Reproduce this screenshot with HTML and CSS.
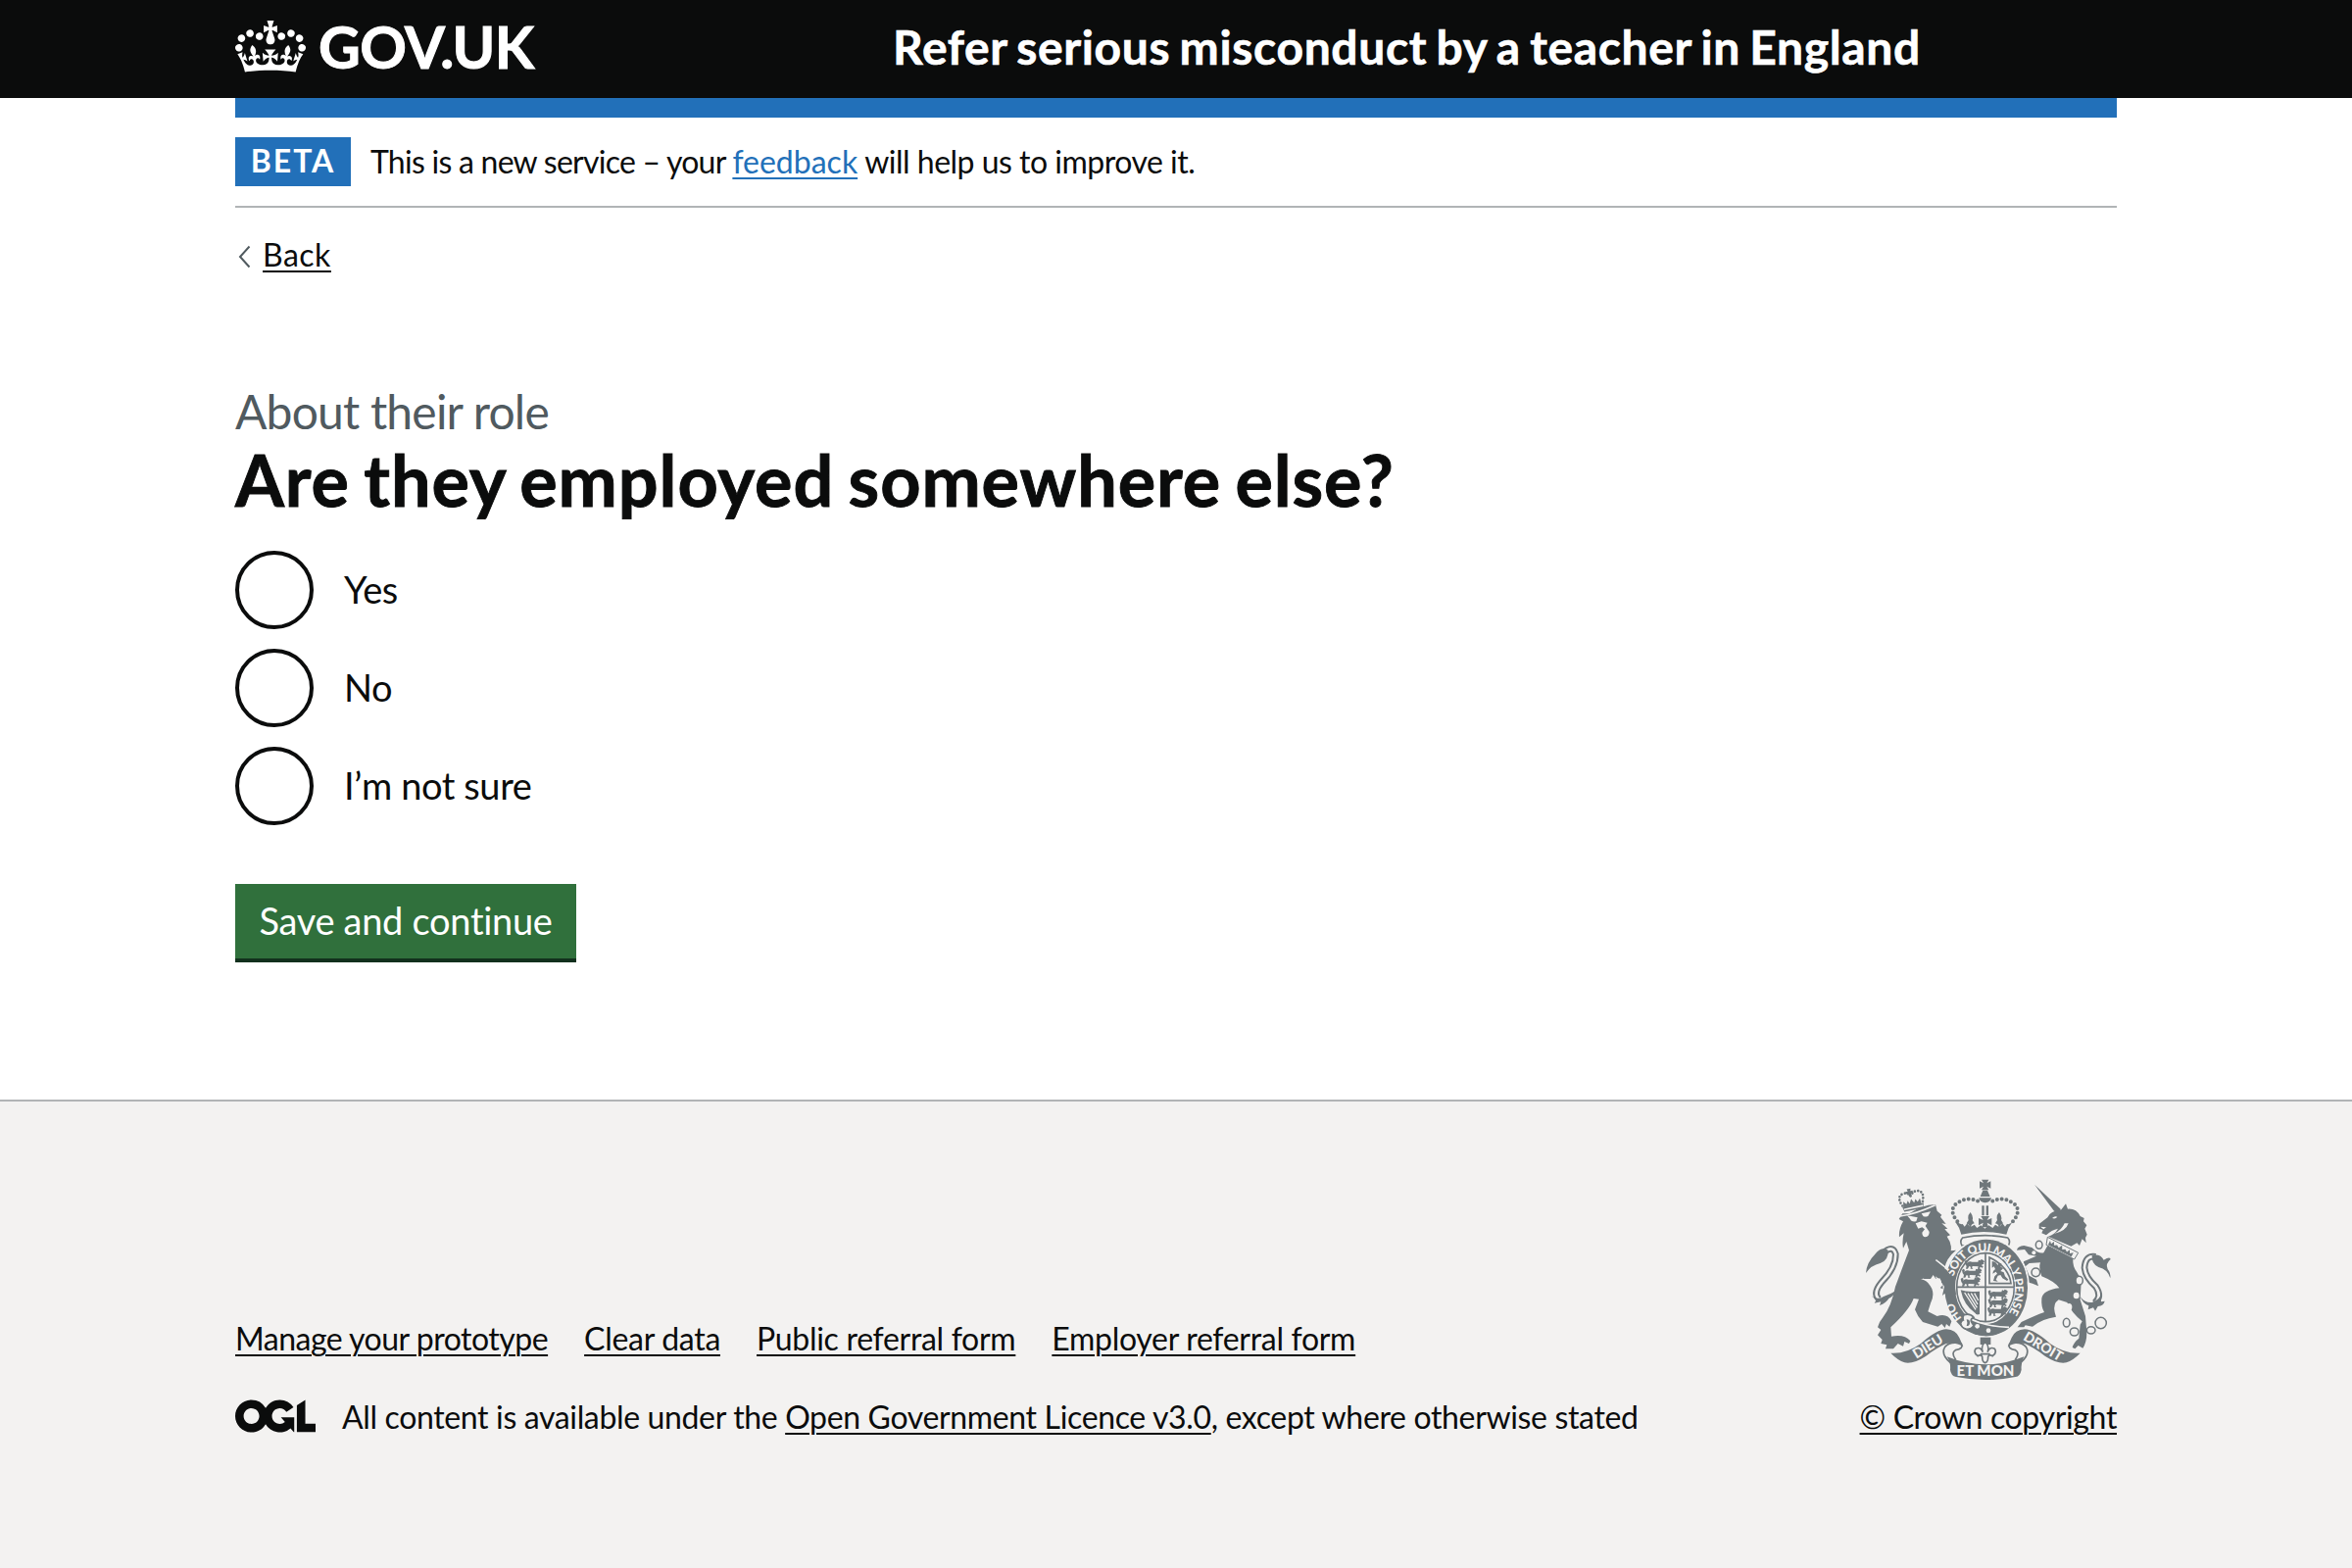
FILE: index.html
```html
<!DOCTYPE html>
<html lang="en">
<head>
<meta charset="utf-8">
<title>Are they employed somewhere else?</title>
<link rel="stylesheet" href="styles.css">
</head>
<body>
<header class="header">
  <div class="container header-inner">
    <a class="logo" href="#">
      <svg class="logo-crown" viewBox="0 0 132 97" aria-hidden="true"><path fill="currentColor" fill-rule="evenodd" d="M25 30.2c3.5 1.5 7.7-.2 9.1-3.7 1.5-3.6-.2-7.8-3.9-9.2-3.6-1.4-7.6.3-9.1 3.9-1.4 3.5.3 7.5 3.9 9zM9 39.5c3.6 1.5 7.8-.2 9.2-3.7 1.5-3.6-.2-7.8-3.9-9.1-3.6-1.5-7.6.2-9.1 3.8-1.4 3.5.3 7.5 3.8 9zM4.4 57.2c3.5 1.5 7.7-.2 9.1-3.8 1.5-3.6-.2-7.7-3.9-9.1-3.5-1.5-7.6.3-9.1 3.8-1.4 3.5.3 7.6 3.9 9.1zm38.3-21.4c3.5 1.5 7.7-.2 9.1-3.8 1.5-3.6-.2-7.7-3.9-9.1-3.6-1.5-7.6.3-9.1 3.8-1.3 3.6.4 7.7 3.9 9.1zm64.4-5.6c-3.6 1.5-7.8-.2-9.1-3.7-1.5-3.6.2-7.8 3.8-9.2 3.6-1.4 7.7.3 9.2 3.9 1.3 3.5-.4 7.5-3.9 9zm15.9 9.3c-3.6 1.5-7.7-.2-9.1-3.7-1.5-3.6.2-7.8 3.7-9.1 3.6-1.5 7.7.2 9.2 3.8 1.5 3.5-.3 7.5-3.8 9zm4.7 17.7c-3.6 1.5-7.8-.2-9.2-3.8-1.5-3.6.2-7.7 3.9-9.1 3.6-1.5 7.7.3 9.2 3.8 1.3 3.5-.4 7.6-3.9 9.1zM89.3 35.8c-3.6 1.5-7.8-.2-9.2-3.8-1.4-3.6.2-7.7 3.9-9.1 3.6-1.5 7.7.3 9.2 3.8 1.4 3.6-.3 7.7-3.9 9.1zM69.7 17.7l8.9 4.7V9.3l-8.9 2.8c-.2-.3-.5-.6-.9-.9L72.4 0H59.6l3.5 11.2c-.3.3-.6.5-.9.9l-8.8-2.8v13.1l8.8-4.7c.3.3.6.7.9.9l-5 15.4v.1c-.2.8-.4 1.6-.4 2.4 0 4.1 3.1 7.5 7 8.1h.2c.3 0 .7.1 1 .1.4 0 .7 0 1-.1h.2c4-.6 7.1-4.1 7.1-8.1 0-.8-.1-1.7-.4-2.4V34l-5.1-15.4c.4-.2.7-.6 1-.9zM66 92.8c16.9 0 32.8 1.1 47.1 3.2 4-16.9 8.9-26.7 14-33.5l-9.6-3.4c1 4.9 1.1 7.2 0 10.2-1.5-1.4-3-4.3-4.2-8.7L108.6 76c2.8-2 5-3.2 7.5-3.3-4.4 9.4-10 11.9-13.6 11.2-4.3-.8-6.3-4.6-5.6-7.9 1-4.7 5.7-5.9 8-.5 4.3-8.7-3-11.4-7.6-8.8 7.1-7.2 7.9-13.5 2.1-21.1-8 6.1-8.1 12.3-4.5 20.8-4.7-5.4-12.1-2.5-9.5 6.2 3.4-5.2 7.9-2 7.2 3.1-.6 4.3-6.4 7.8-13.5 7.2-10.3-.9-10.9-8-11.2-13.8 2.5-.5 7.1 1.8 11 7.3L80.2 60c-4.1 4.4-8 5.3-12.3 5.4 1.4-4.4 8-11.6 8-11.6H55.5s6.4 7.2 7.9 11.6c-4.2-.1-8-1-12.3-5.4l1.4 16.4c3.9-5.5 8.5-7.7 10.9-7.3-.3 5.8-.9 12.8-11.1 13.8-7.2.6-12.9-2.9-13.5-7.2-.7-5 3.8-8.3 7.1-3.1 2.7-8.7-4.6-11.6-9.4-6.2 3.7-8.5 3.6-14.7-4.6-20.8-5.8 7.6-5 13.9 2.2 21.1-4.7-2.6-11.9.1-7.7 8.8 2.3-5.5 7.1-4.2 8.1.5.7 3.3-1.3 7.1-5.7 7.9-3.5.7-9-1.8-13.5-11.2 2.5.1 4.7 1.3 7.5 3.3l-4.7-15.4c-1.2 4.4-2.7 7.2-4.3 8.7-1.1-3-.9-5.3 0-10.2l-9.5 3.4c5 6.9 9.9 16.7 14 33.5 14.8-2.1 30.8-3.2 47.7-3.2z"/></svg>
      <span class="logo-text">GOV.UK</span>
    </a>
    <a class="service-name" href="#">Refer serious misconduct by a teacher in England</a>
  </div>
</header>

<div class="container">
  <div class="blue-bar"></div>
  <div class="phase">
    <strong class="phase-tag">BETA</strong>
    <span class="phase-text"><span class="phase-lead">This is a new service – your </span><a class="link-blue" href="#">feedback</a> will help us to improve it.</span>
  </div>
  <a class="back" href="#">
    <svg class="back-icon" viewBox="0 0 14 24" aria-hidden="true"><path d="M12.500 1.500L3 12L12.500 22.500" fill="none" stroke="#505a5f" stroke-width="2"/></svg>
    <span class="underlined">Back</span>
  </a>
  <main class="main">
    <span class="caption">About their role</span>
    <h1 class="heading">Are they employed somewhere else?</h1>
    <div class="radios">
      <label class="radio"><span class="radio-dot"></span><span class="radio-label">Yes</span></label>
      <label class="radio"><span class="radio-dot"></span><span class="radio-label">No</span></label>
      <label class="radio"><span class="radio-dot"></span><span class="radio-label">I’m not sure</span></label>
    </div>
    <button class="button">Save and continue</button>
  </main>
</div>

<footer class="footer">
  <div class="container footer-inner">
    <div class="footer-main">
      <nav class="footer-links">
        <a class="underlined manage" href="#">Manage your prototype</a>
        <a class="underlined" href="#">Clear data</a>
        <a class="underlined" href="#">Public referral form</a>
        <a class="underlined" href="#">Employer referral form</a>
      </nav>
      <div class="licence">
        <svg class="ogl" viewBox="0 0 483.200 195.700" aria-hidden="true"><path fill="currentColor" d="M421.500 142.800V.1l-50.700 32.300v161.100h112.400v-50.700zm-122.300-9.600A47.120 47.120 0 0 1 221 97.800c0-26 21.100-47.100 47.100-47.100 16.700 0 31.400 8.700 39.700 21.800l42.700-27.200A97.630 97.630 0 0 0 268.100 0c-36.500 0-68.300 20.100-85.100 49.700A98 98 0 0 0 97.800 0C43.900 0 0 43.900 0 97.800s43.900 97.800 97.800 97.800c36.500 0 68.300-20.100 85.100-49.700a97.760 97.760 0 0 0 149.600 25.400l19.400 22.200h3v-87.800h-80l24.300 27.500zM97.800 145c-26 0-47.100-21.100-47.100-47.100s21.100-47.100 47.100-47.100 47.100 21.100 47.100 47.100S123.800 145 97.800 145"/></svg>
        <span>All content is available under the <a class="underlined" href="#">Open Government Licence v3.0</a>, except where otherwise stated</span>
      </div>
    </div>
    <a class="copyright" href="#">
      <svg class="crest" viewBox="72 70 750 615" aria-hidden="true">
        <defs>
          <path id="garter-line" d="M366 496A97 117 0 1 1 494 499"/>
          <g id="passant">
            <path d="M-4 2l5-4 4 4-2 5q8-6 16-3h18l2-6 5 2 3-4 7 3 3 5-4 3 3 3-6 2-2 3 5 3-2 4-7-3-2 6h-6l2-7-17-1-3 3 4 5h-8l1-6-5-2-4 8h-6l2-8-4-6z"/>
          </g>
        </defs>
        <!-- tails -->
        <g fill="none">
          <path class="thick" d="M122 300Q154 268 163 300Q164 342 120 386Q92 420 112 438"/>
          <path class="hollow" d="M122 300Q154 268 163 300Q164 342 120 386Q92 420 112 438"/>
          <path class="thick" d="M775 308Q744 302 741 342Q744 372 776 400Q796 430 772 450"/>
          <path class="hollow" d="M775 308Q744 302 741 342Q744 372 776 400Q796 430 772 450"/>
        </g>
        <g class="ink">
          <path d="M72 358Q74 326 100 300Q120 276 140 288Q142 318 116 328Q88 334 72 358Z"/>
          <path d="M88 428Q108 442 126 430Q150 422 168 410Q158 428 142 436Q134 450 114 457L118 446L98 450L104 440Z"/>
          <path d="M820 374Q812 346 784 340Q762 330 764 304Q790 298 800 318Q820 306 821 316Q804 330 812 346Q822 358 820 374Z"/>
          <path d="M728 430Q742 450 764 448Q784 440 790 428L792 446L803 444Q800 458 782 460L774 474L768 464L752 470L754 458Q736 452 728 430Z"/>
          <!-- lion -->
          <path d="M173 193L184 176L205 176Q240 150 285 148L290 168L304 180L300 186L317 208L304 206L322 222L313 224L330 242L320 246Q336 268 332 290L348 288Q318 312 312 345L340 362Q352 392 350 424L338 430L334 420L326 430L320 418L308 428L312 408L300 404L306 392L298 378L285 368L290 384L278 374L262 380L244 374Q262 384 274 406Q282 428 270 450L262 476L290 490Q322 480 334 506L328 522L318 514L314 526L304 514L292 522L246 508Q230 492 222 470L234 438L218 436Q206 470 148 524L150 552Q190 544 208 566L204 574L190 568L186 582L170 574L156 590L132 590L136 578L118 574L122 562L108 548L118 532L108 524Q112 508 124 494Q150 460 162 400Q184 340 204 288L196 262L186 282Q182 262 188 236L174 248Q172 224 186 200Z"/>
        </g>
        <path class="paper" d="M198 182l32 6-4 12q-16 2-18-6zM242 176l28-6-8 14q-14 4-16-2zM224 206l18-6 18 4-6 10 12 18q0 14-12 16-10-2-10-14l8-10-8-6-12 4zM240 376l30 0 8-12 8 12 20-4-4 14 6 10-14 8-22-16z"/>
        <g fill="none">
          <path class="gap" d="M286 318L340 360"/>
          <path class="gap" d="M176 184Q222 178 284 150"/>
        </g>
        <!-- lion crown -->
        <g transform="rotate(-12 214 140)">
          <path class="ink" d="M181 150h66l-3 15h-60zM184 150l3-16 8 9 6-9 4 10 7-13 7 13 6-10 5 9 9-9 1 16zM208 122l-2-9h-6v-7h7l-2-7h12l-2 7h7v7h-6l-2 9z"/>
          <path class="beads small" d="M182 146Q168 114 192 110Q206 108 213 122Q222 108 236 110Q258 116 245 146"/>
          <path class="gap" d="M184 158h60"/>
        </g>
        <!-- unicorn -->
        <g class="ink">
          <path d="M588 87L668 162L664 172L648 168Z"/>
          <path d="M684 146L690 162Q716 160 728 184L740 190L738 200L748 212L742 222L749 240L744 250L746 266L734 254L726 274L718 266L700 276L630 246Q650 240 660 222Q640 226 624 242L610 236L614 226L602 222L602 208L628 188Q636 168 670 164Z"/>
          <path d="M628 274L706 314Q704 338 718 356Q734 380 730 404L728 440L744 490L748 540Q748 570 736 588L722 580L712 590L704 586Q708 570 724 558L728 516L734 506Q700 478 688 448L662 440Q644 452 650 478L654 492Q610 498 582 522L560 518L556 524L536 524L548 508Q590 488 618 478Q608 462 610 436Q614 410 664 404Q650 384 610 368Q600 340 606 326L572 328L560 338L572 366L594 378L600 398L582 390L566 386L552 344L536 346L556 322Q580 312 594 306L570 302L558 286L534 288Q536 276 556 274L580 280Q600 300 616 296Z"/>
        </g>
        <g class="paper">
          <path d="M692 206Q684 230 648 238Q672 226 680 206ZM642 190q8-8 16-4-6 8-16 4zM606 216l18 2-8 6zM628 248L722 296L710 316L624 272Z"/>
          <ellipse cx="716" cy="427" rx="9" ry="10"/><ellipse cx="694" cy="462" rx="9" ry="11"/><circle cx="586" cy="296" r="6"/>
          <ellipse cx="725" cy="381" rx="11" ry="13"/>
        </g>
        <g fill="none">
          <path class="collar" d="M628 248L722 296L710 316L624 272Z"/>
          <ellipse class="link" cx="602" cy="272" rx="10" ry="12"/><ellipse class="link" cx="592" cy="356" rx="13" ry="13"/>
          <ellipse class="link" cx="725" cy="381" rx="11" ry="13"/><ellipse class="link" cx="686" cy="510" rx="10" ry="13"/>
          <ellipse class="link" cx="710" cy="538" rx="13" ry="12"/><ellipse class="link" cx="761" cy="533" rx="13" ry="11"/><circle class="link" cx="791" cy="511" r="17"/>
        </g>
        <g transform="translate(626 270) rotate(27)"><path class="ink" d="M4 0V-14l7 7 5-10 5 10 8-5 8 5 6-11 6 11 8-5 8 5 5-10 5 10 9-7V0z"/></g>

        <!-- royal crown -->
        <g class="ink">
          <path d="M426 72h22l-6 11 12-6v22l-12-6 6 11h-22l6-11-12 6V77l12 6zM422 124l8-19h14l8 19zM418 128h38q-2 14-19 15-17-1-19-15z"/>
          <path d="M427 152h7v30h-7zM440 152h7v30h-7zM424 184h26l-7 12 14-6v22l-14-8 4 14h-20l4-14-14 8v-22l14 6z"/>
          <path d="M352 202q8 8 16 6l6 8 8-10 8 10q-2-8-10-10l6-10q-4-14 6-24 10 14 6 24l6 10q-10 2-10 10l10-6 8 10 12-8 12 10 12-10 12 8 8-10 10 6q0-8-10-10l6-10q-4-14 6-24 10 14 6 24l6 10q-8 2-10 10l8-10 8 10 6-8q8 2 16-6-14 18-18 38-70-16-138 0-4-20-18-38z"/>
        </g>
        <path class="beads" d="M352 200Q320 160 358 140Q386 124 416 138M522 200Q554 160 516 140Q488 124 458 138"/>
        <path class="outline paper" d="M368 250Q437 236 506 250Q516 260 508 274L366 274Q358 260 368 250Z"/>

        <!-- garter and shield -->
        <ellipse class="gap" cx="440" cy="403" rx="130" ry="150" fill="none"/>
        <ellipse class="ink" cx="440" cy="403" rx="127" ry="148"/>
        <ellipse class="paper" cx="438" cy="402" rx="93" ry="112"/>
        <ellipse class="outline" cx="438" cy="402" rx="88" ry="105" fill="none"/>
        <path class="outline" d="M438 297v210M350 401h176" fill="none"/>
        <g class="ink">
          <use href="#passant" x="378" y="320"/><use href="#passant" x="370" y="347"/><use href="#passant" x="366" y="374"/>
          <use href="#passant" x="450" y="412"/><use href="#passant" x="450" y="438"/><use href="#passant" x="448" y="464"/>
          <path d="M458 322l10 2 8 10 2-8 10 4-4 8 8 6-8 8 10 4 4 12 10 10-4 4-14-8-6-10-8 2-6 12 6 6-14-2 4-14 8-8-4-6-10 6 2-8 6-6-4-8-6 4z"/>
          <path d="M388 492Q430 524 506 528Q470 550 440 551Q396 548 372 522Z"/>
          <path d="M478 522Q500 508 512 486L526 494L506 530Z"/>
          <path d="M362 410q20 8 58 4v70q-10 4-14-4-34-22-44-70z"/>
        </g>
        <path class="outline" d="M450 310v80h66Q510 340 450 310Z" fill="none"/>
        <path class="strings" d="M374 418l34 52M384 420l28 44M394 420l20 34M404 420l12 22"/>
        <path class="gap" d="M384 494Q430 522 510 524" fill="none"/>
        <path class="outline paper" d="M372 486q20-6 30 8-10 4-8 12 4 8 8 12-6 12-22 12-16-4-18-18 2-8 8-10-4-8 2-16z"/>
        <path class="ink" d="M380 500q10 0 10 10t-10 10q4-10 0-20z"/>
        <circle class="paper" cx="413" cy="521" r="7"/><circle class="paper" cx="447" cy="534" r="7"/>
        <text class="garter-text"><textPath href="#garter-line">HO<tspan dx="80">SOIT QUI MAL Y PENSE</tspan></textPath></text>
        <path class="ink" d="M284 320L320 350Q344 376 348 424L336 430L330 420L320 428L318 418L306 426L312 400L296 370Z"/>

        <!-- scroll and motto -->
        <path class="outline paper" d="M330 632Q300 606 314 584Q330 566 364 574Q372 590 346 594Q332 602 346 622ZM546 632Q576 606 562 584Q546 566 512 574Q504 590 530 594Q544 602 530 622Z"/>
        <g class="ink">
          <path d="M148 603Q196 606 240 574Q290 530 318 530Q348 532 358 556L370 584Q350 568 318 574Q290 586 256 612Q216 638 190 632Q168 624 148 603Z"/>
          <path d="M728 603Q680 606 636 574Q586 530 558 530Q528 532 518 556L506 584Q526 568 558 574Q586 586 620 612Q660 638 686 632Q708 624 728 603Z"/>
          <path d="M320 614Q438 662 556 614Q546 630 548 654Q544 674 530 676Q438 694 348 676Q332 672 330 654Q332 632 320 614Z"/>
          <path d="M422 555h32v22h-32z"/>
        </g>
        <path class="outline paper" d="M437 568Q452 584 444 600Q452 582 466 590Q474 602 460 612Q450 606 446 614Q446 632 437 633Q428 632 428 614Q424 606 414 612Q400 602 408 590Q422 582 430 600Q422 584 437 568ZM422 606h30"/>
        <g class="motto">
          <text x="262" y="597" transform="rotate(-32 262 584)">DIEU</text>
          <text class="motto-mid" x="438" y="674">ET MON</text>
          <text x="614" y="597" transform="rotate(31 614 584)">DROIT</text>
        </g>
      </svg>
      <span class="underlined">© Crown copyright</span>
    </a>
  </div>
</footer>
</body>
</html>
```
FILE: styles.css
```css
* { box-sizing: border-box; }
body {
  margin: 0;
  min-height: 1600px;
  display: flex;
  flex-direction: column;
  background: #fff;
  color: #0b0c0c;
  font-family: Lato, "Liberation Sans", sans-serif;
  font-size: 32px;
  line-height: 40px;
  letter-spacing: -0.35px;
}
a { color: inherit; text-decoration: none; }
.container { width: 1920px; margin: 0 auto; }
.underlined,
.link-blue {
  text-decoration: underline;
  text-decoration-thickness: 2px;
  text-underline-offset: 4px;
}

.header { background: #0b0c0c; color: #fff; height: 100px; }
.header-inner { display: flex; height: 100px; }
.logo { display: flex; width: 671px; padding-top: 21px; }
.logo-crown { width: 72px; height: 53px; }
.logo-text {
  margin-left: 13px;
  padding-top: 1px;
  font-size: 59px;
  line-height: 52px;
  font-weight: 700;
  letter-spacing: -0.6px;
  -webkit-text-stroke: 1px #fff;
}
.service-name {
  padding-top: 18px;
  font-size: 48px;
  line-height: 60px;
  font-weight: 700;
  letter-spacing: 0.65px;
  word-spacing: -3px;
  -webkit-text-stroke: 0.6px #fff;
}

.blue-bar { height: 20px; background: #2270b9; }
.phase {
  display: flex;
  height: 92px;
  padding-top: 20px;
  border-bottom: 2px solid #b1b4b6;
}
.phase-tag {
  width: 118px;
  height: 50px;
  background: #2270b9;
  color: #fff;
  text-align: center;
  line-height: 48px;
  letter-spacing: 2px;
}
.phase-text { margin-left: 20px; line-height: 49px; letter-spacing: -0.5px; white-space: pre; }
.phase-lead { letter-spacing: -0.75px; }
.link-blue { color: #2270b9; letter-spacing: 0; }

.back { display: flex; margin-top: 28px; width: max-content; letter-spacing: 0.5px; }
.back-icon { width: 14px; height: 24px; margin: 10px 12px 0 2px; }

.main { padding-top: 110px; }
.caption { display: block; color: #505a5f; font-size: 48px; line-height: 60px; letter-spacing: -0.8px; }
.heading {
  margin: 0;
  font-size: 72px;
  line-height: 78px;
  font-weight: 700;
  letter-spacing: 0.9px;
  word-spacing: -4px;
  -webkit-text-stroke: 0.9px #0b0c0c;
}
.radios { display: flex; flex-direction: column; gap: 20px; margin-top: 34px; }
.radio { display: flex; height: 80px; }
.radio-dot { width: 80px; height: 80px; border: 4px solid #0b0c0c; border-radius: 50%; }
.radio-label { margin-left: 31px; font-size: 38px; line-height: 79px; letter-spacing: -0.4px; }
.button {
  display: block;
  width: 348px;
  height: 80px;
  margin-top: 60px;
  padding: 0 0 2px;
  border: 0;
  border-bottom: 4px solid #12301d;
  background: #30703c;
  color: #fff;
  font: 38px Lato, "Liberation Sans", sans-serif;
  letter-spacing: -0.3px;
}

.footer {
  flex: 1;
  margin-top: 140px;
  border-top: 2px solid #b1b4b6;
  background: #f3f2f1;
}
.footer-inner { display: flex; justify-content: space-between; align-items: flex-end; padding-top: 79px; }
.footer-links { display: flex; gap: 37px; margin-bottom: 40px; letter-spacing: -0.35px; }
.footer-links > :nth-child(n + 2) { letter-spacing: -0.3px; }
.footer-links > .manage { letter-spacing: -0.5px; }
.licence { display: flex; }
.ogl { width: 82px; height: 34px; margin: 2px 27px 0 0; }
.copyright { display: flex; flex-direction: column; align-items: flex-end; }
.crest { width: 250px; height: 205px; margin: 0 6px 18px 0; }

.ink { fill: #6f777b; }
.paper { fill: #f3f2f1; }
.outline { stroke: #6f777b; stroke-width: 5; }
.collar { stroke: #6f777b; stroke-width: 3; }
.link { stroke: #6f777b; stroke-width: 4.5; }
.thick { stroke: #6f777b; stroke-width: 20; }
.hollow { stroke: #f3f2f1; stroke-width: 8; }
.gap { stroke: #f3f2f1; stroke-width: 5; }
.strings { stroke: #f3f2f1; stroke-width: 4; fill: none; }
.beads { fill: none; stroke: #6f777b; stroke-width: 12; stroke-linecap: round; stroke-dasharray: 0 14.5; }
.beads.small { stroke-width: 8; stroke-dasharray: 0 10; }
.garter-text { fill: #f3f2f1; font: 900 36px Lato, sans-serif; letter-spacing: -1.2px; }
.motto { fill: #f3f2f1; font: 900 42px Lato, sans-serif; letter-spacing: 0; text-anchor: middle; }
.motto-mid { font-size: 45px; }
```
